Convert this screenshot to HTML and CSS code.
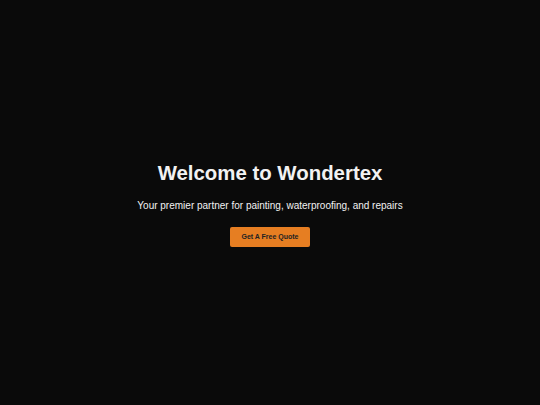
FILE: index.html
```html
<!DOCTYPE html>
<html lang="en">
<head>
<meta charset="utf-8">
<title>Wondertex</title>
<link rel="stylesheet" href="styles.css">
</head>
<body>
<section class="hero">
  <h1 class="hero-title">Welcome to Wondertex</h1>
  <p class="hero-text">Your premier partner for painting, waterproofing, and repairs</p>
  <a class="hero-btn" href="#">Get A Free Quote</a>
</section>
</body>
</html>
```

FILE: styles.css
```css
html, body {
  margin: 0;
  padding: 0;
  background: #0a0a0a;
}
body {
  font-family: "Liberation Sans", Arial, sans-serif;
  color: #f2f2f2;
}
.hero {
  min-height: 100vh;
  box-sizing: border-box;
  padding-top: 3px;
  display: flex;
  flex-direction: column;
  align-items: center;
  justify-content: center;
  text-align: center;
}
.hero-title {
  margin: 0;
  font-size: 20.4px;
  line-height: 24px;
  font-weight: 700;
}
.hero-text {
  margin: 14px 0 0;
  font-size: 10px;
  line-height: 13px;
}
.hero-btn {
  margin-top: 15px;
  display: block;
  width: 80px;
  height: 20px;
  line-height: 20px;
  background: #e67e22;
  color: #222;
  border-radius: 2px;
  font-size: 7px;
  font-weight: 700;
  text-decoration: none;
}
```
